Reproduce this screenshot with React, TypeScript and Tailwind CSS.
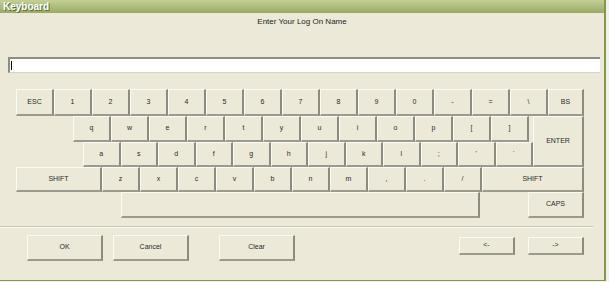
import React from 'react';

// On-screen keyboard dialog, XP style
const Key: React.FC<{ label: string; w: string; h?: string }> = ({ label, w, h = 'h-[25px]' }) => (
    <div
        className={`${w} ${h} shrink-0 flex items-center justify-center bg-[#ece9d8] border-t border-l border-t-[#fbfaf4] border-l-[#fbfaf4] border-r-2 border-b-2 border-r-[#8d8b80] border-b-[#9c9a8e] text-[7px] text-[#2a2a2a]`}
    >
        {label}
    </div>
);

const row1 = ['ESC', '1', '2', '3', '4', '5', '6', '7', '8', '9', '0', '-', '=', '\\'];
const row2 = ['q', 'w', 'e', 'r', 't', 'y', 'u', 'i', 'o', 'p', '[', ']'];
const row3 = ['a', 's', 'd', 'f', 'g', 'h', 'j', 'k', 'l', ';', '\'', '`'];
const row4 = ['z', 'x', 'c', 'v', 'b', 'n', 'm', ',', '.', '/'];

export default function App() {
    return (
        <div className="w-[609px] h-[282px] bg-[#f3f1e6] overflow-hidden" style={{ fontFamily: '"Liberation Sans", Arial, sans-serif' }}>
            <div className="w-[606px] h-[281px] bg-[#ece9d8] border-r-2 border-b border-r-[#7f9a4e] border-b-[#7f9a4e] flex flex-col">
                {/* title bar */}
                <div className="h-[13px] bg-gradient-to-b from-[#c4cf98] via-[#adbd7c] to-[#98aa66] flex items-center px-[3px]">
                    <span className="text-[10px] font-bold text-white leading-none [text-shadow:1px_1px_0_#5b6a33]">Keyboard</span>
                </div>

                <div className="h-[13px] mt-[2px] flex items-center justify-center text-[8px] text-[#222]">Enter Your Log On Name</div>

                {/* input */}
                <div className="mt-[29px] ml-[8px] w-[592px] h-[16px] bg-white border-t-2 border-l-2 border-t-[#8e8d84] border-l-[#8e8d84] border-b border-b-[#d6d3c4] flex items-center pl-[1px]">
                    <div className="w-px h-[9px] bg-black" />
                </div>

                {/* keys */}
                <div className="mt-[16px] ml-[16px] flex flex-col">
                    <div className="flex">
                        {row1.map((k) => (
                            <Key key={k} label={k} w="w-[38px]" h="h-[27px]" />
                        ))}
                        <Key label="BS" w="w-[36px]" h="h-[27px]" />
                    </div>
                    <div className="flex">
                        <div className="flex flex-col">
                            <div className="flex ml-[57px]">
                                {row2.map((k) => (
                                    <Key key={k} label={k} w="w-[38px]" h="h-[26px]" />
                                ))}
                            </div>
                            <div className="flex ml-[67px]">
                                {row3.map((k) => (
                                    <Key key={k} label={k} w="w-[37.5px]" />
                                ))}
                            </div>
                        </div>
                        <div className="ml-[0px]">
                            <Key label="ENTER" w="w-[51px]" h="h-[51px]" />
                        </div>
                    </div>
                    <div className="flex">
                        <Key label="SHIFT" w="w-[86px]" />
                        {row4.map((k) => (
                            <Key key={k} label={k} w="w-[38px]" />
                        ))}
                        <Key label="SHIFT" w="w-[102px]" />
                    </div>
                    <div className="flex">
                        <div className="ml-[105px]">
                            <Key label="" w="w-[359px]" h="h-[26px]" />
                        </div>
                        <div className="ml-[48px]">
                            <Key label="CAPS" w="w-[56px]" h="h-[26px]" />
                        </div>
                    </div>
                </div>

                {/* groove */}
                <div className="mt-[8px] w-[593px] h-[2px] border-t border-t-[#c9c6b6] border-b border-b-[#fbfaf2]" />

                {/* buttons */}
                <div className="mt-[7px] flex items-start">
                    <div className="ml-[27px]"><Key label="OK" w="w-[76px]" h="h-[26px]" /></div>
                    <div className="ml-[10px]"><Key label="Cancel" w="w-[76px]" h="h-[26px]" /></div>
                    <div className="ml-[30px]"><Key label="Clear" w="w-[76px]" h="h-[26px]" /></div>
                    <div className="ml-[164px] mt-[2px]"><Key label="<-" w="w-[56px]" h="h-[18px]" /></div>
                    <div className="ml-[13px] mt-[2px]"><Key label="->" w="w-[56px]" h="h-[18px]" /></div>
                </div>
            </div>
        </div>
    );
}
